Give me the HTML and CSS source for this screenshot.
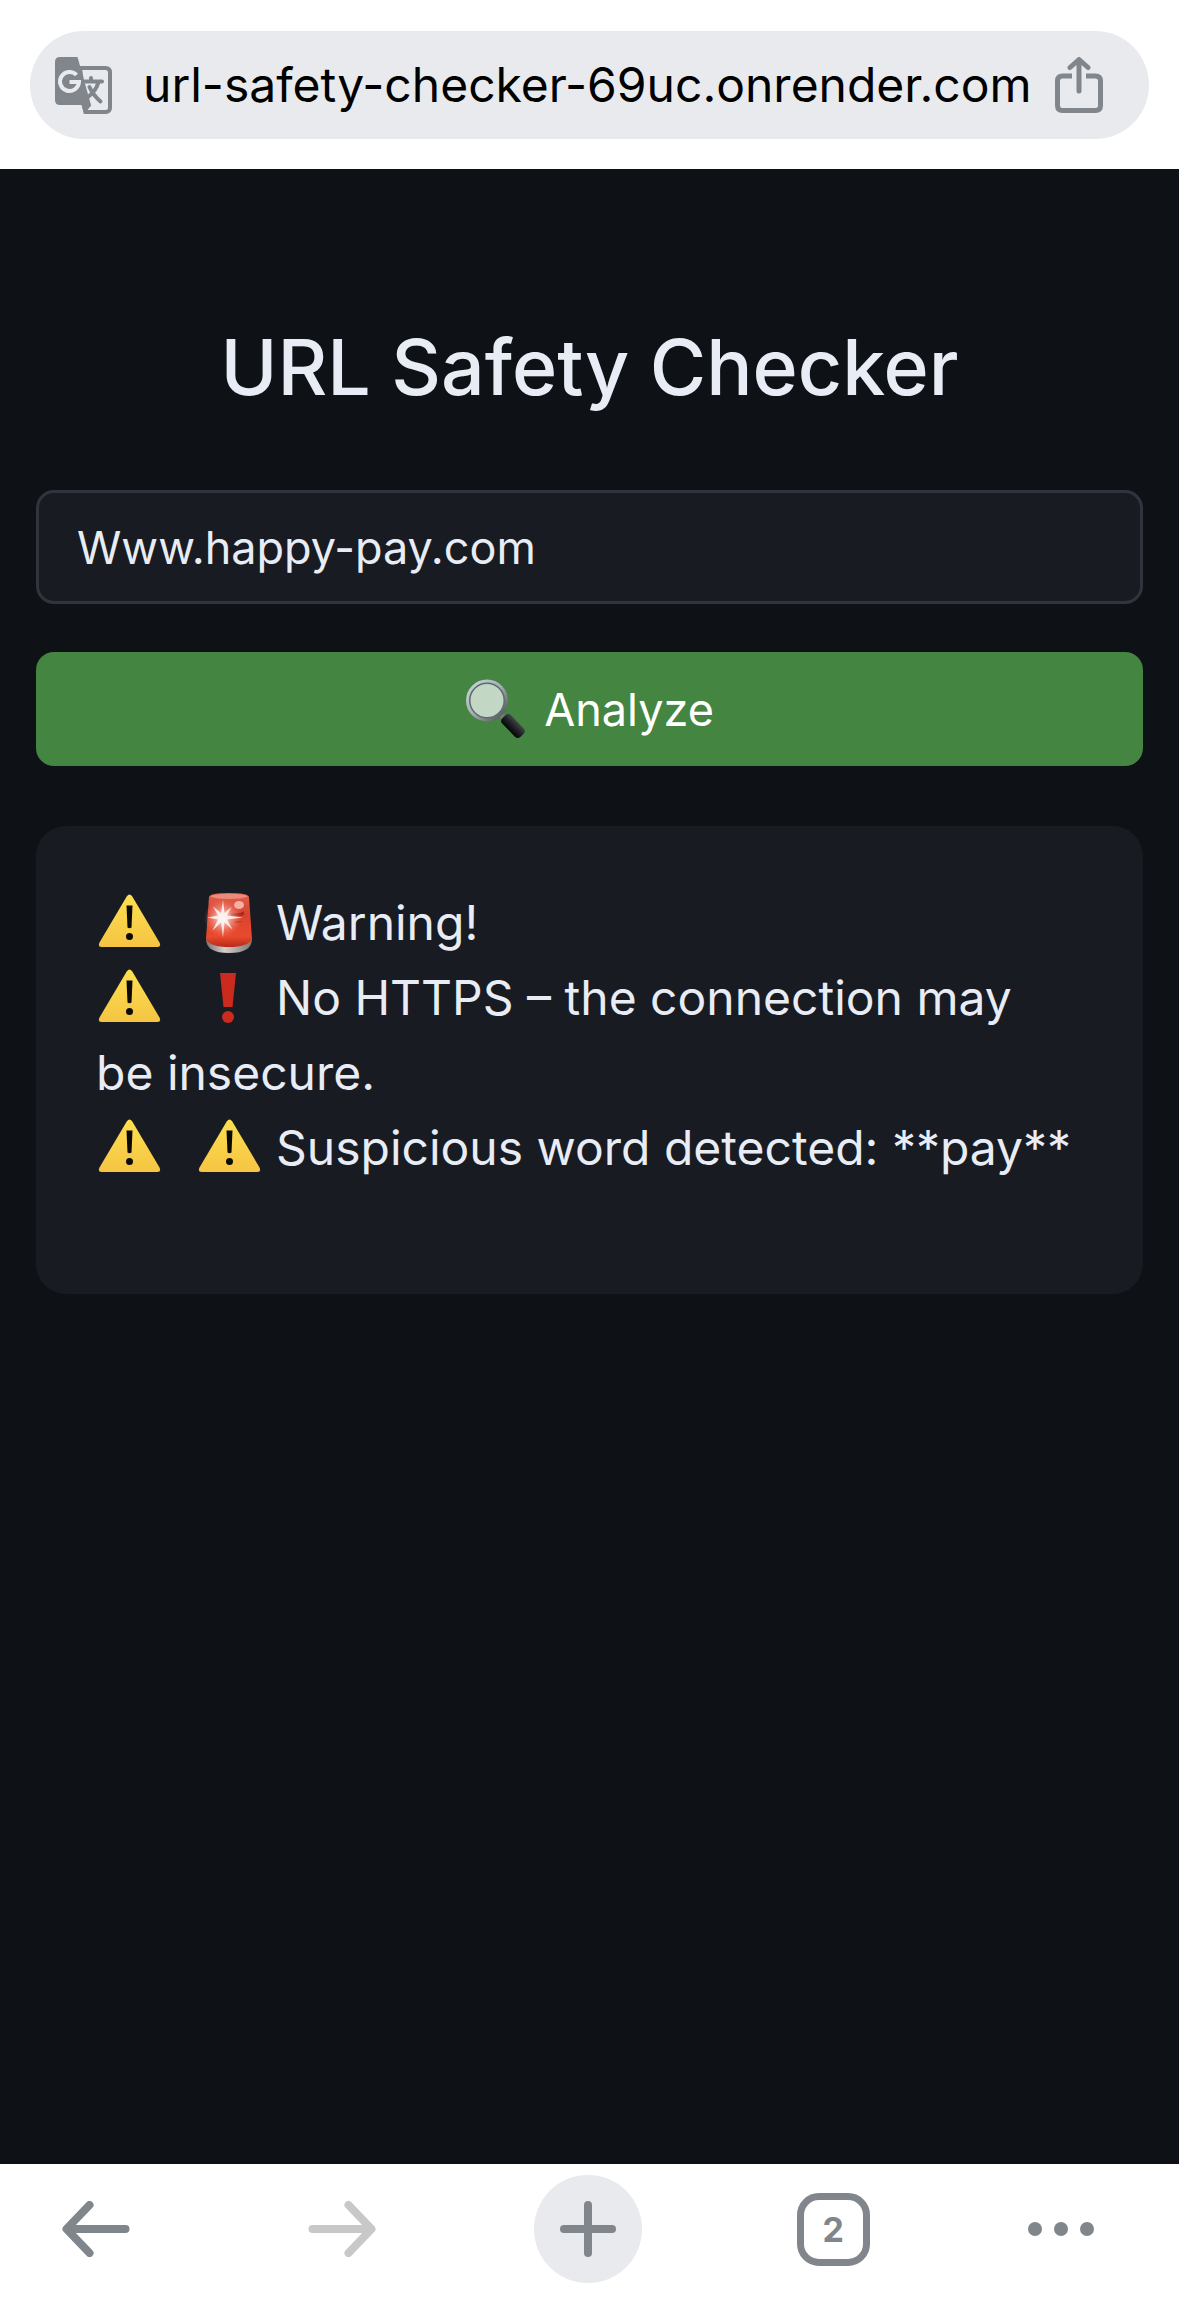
FILE: index.html
```html
<!DOCTYPE html>
<html lang="en">
<head>
<meta charset="utf-8">
<meta name="viewport" content="width=device-width, initial-scale=1">
<title>URL Safety Checker</title>
<link rel="stylesheet" href="styles.css">
</head>
<body>
<svg class="defs" aria-hidden="true">
  <defs>
    <linearGradient id="amber" x1="0" y1="0" x2="0" y2="1">
      <stop offset="0" stop-color="#fde04f"/><stop offset="1" stop-color="#f5c443"/>
    </linearGradient>
    <linearGradient id="dome" x1="0" y1="0" x2="0" y2="1">
      <stop offset="0" stop-color="#e2604d"/><stop offset=".4" stop-color="#d8432f"/><stop offset=".8" stop-color="#ea4a2e"/><stop offset="1" stop-color="#b92a19"/>
    </linearGradient>
    <linearGradient id="base" x1="0" y1="0" x2="1" y2="0">
      <stop offset="0" stop-color="#77706d"/><stop offset=".4" stop-color="#d5d0cc"/><stop offset="1" stop-color="#7d7673"/>
    </linearGradient>
    <radialGradient id="glow">
      <stop offset="0" stop-color="#fff"/><stop offset=".35" stop-color="#ffe3dc" stop-opacity=".8"/><stop offset="1" stop-color="#ff8a75" stop-opacity="0"/>
    </radialGradient>
    <linearGradient id="rim" x1="0" y1="0" x2="1" y2="1">
      <stop offset="0" stop-color="#c9dadd"/><stop offset=".5" stop-color="#a3adb0"/><stop offset="1" stop-color="#454a4c"/>
    </linearGradient>
    <linearGradient id="grip" x1="0" y1="1" x2="0" y2="0">
      <stop offset="0" stop-color="#050506"/><stop offset=".6" stop-color="#26272b"/><stop offset="1" stop-color="#44454b"/>
    </linearGradient>
    <symbol id="warning" viewBox="-1 1 66 60">
      <path d="M29.700 4.500Q32.500 .5 35.300 4.500L62.500 50.500Q64.500 55 60.500 55H4.500Q.5 55 2.500 50.500Z" fill="url(#amber)"/>
      <path d="M29.500 13.500h6l-1 22q-2 1.500-4 0Z" fill="#0c0a05"/>
      <circle cx="32.500" cy="44.500" r="3.500" fill="#0c0a05"/>
    </symbol>
    <symbol id="siren" viewBox="-1 0 66 60">
      <path d="M9 46Q9 60 32 60T55 46Z" fill="url(#base)"/>
      <path d="M12 4Q13 0 32 0T52 4L55 46Q51 54 32 54T9 46Z" fill="url(#dome)"/>
      <path d="M13 3.500Q16 .7 32 .7T51 3.500Q45 6 32 6T13 3.500Z" fill="#f0a092" opacity=".7"/>
      <path d="M34 20q10 1 13-2v4q-5 2-13 1zM36 29q6 2 9-1" fill="#7b1a12" opacity=".6"/>
      <ellipse cx="42" cy="12" rx="5" ry="4" fill="#f6b1a6"/>
      <circle cx="26" cy="25" r="19" fill="url(#glow)" opacity=".75"/>
      <path d="M26 7l1.500 13 7-6-4.500 8.500 16 2-16 2 5.500 10-8-7-1.500 15-2-15-8.500 8 5.500-11-11-2 11-2-5-9 8 6.500Z" fill="#fff" opacity=".8"/>
    </symbol>
    <symbol id="bang" viewBox="-1 0 66 60">
      <path d="M23 5h16l-3.500 34h-9Z" fill="#cb2a1f"/>
      <circle cx="31" cy="49" r="6" fill="#cb2a1f"/>
    </symbol>
  </defs>
</svg>

<header class="browser-bar">
  <div class="address">
    <button class="icon-button" type="button" aria-label="Translate">
      <svg width="57" height="57" viewBox="0 0 57 57">
        <path d="M25 11H50.500Q55 11 55 15.500V50.500Q55 55 50.500 55H31Z" fill="none" stroke="#80868b" stroke-width="4"/>
        <path d="M5 0H22.500L36 48 29 57 26.500 48H5Q0 48 0 43V5Q0 0 5 0Z" fill="#80868b"/>
        <path d="M27 48H36.500L29 57Z" fill="#80868b"/>
        <path d="M30 24.500H47M36 21V24M43.500 25Q41 34 33 40M34.500 30Q38 38 45.500 44.500" fill="none" stroke="#80868b" stroke-width="4" stroke-linecap="round"/>
        <path d="M21.500 18A9.500 9.500 0 1 0 24 25H14.500" fill="none" stroke="#e8eaed" stroke-width="4"/>
      </svg>
    </button>
    <input class="address-text" type="text" aria-label="Address" value="url-safety-checker-69uc.onrender.com">
    <button class="icon-button" type="button" aria-label="Share">
      <svg width="48" height="57" viewBox="0 0 48 57" fill="none" stroke="#80868b" stroke-width="5" stroke-linecap="round">
        <path d="M24 34V3M15 10.500L24 2.500L33 10.500" stroke-linejoin="round"/>
        <path d="M17 19H7.500Q2.500 19 2.500 24V48.500Q2.500 53.500 7.500 53.500H40.500Q45.500 53.500 45.500 48.500V24Q45.500 19 40.500 19H31" stroke-linecap="butt"/>
      </svg>
    </button>
  </div>
</header>

<main class="page">
  <h1 class="title">URL Safety Checker</h1>
  <form class="form" onsubmit="return false">
    <input class="field" type="text" aria-label="URL to check" value="Www.happy-pay.com">
    <button class="analyze" type="submit">
      <svg width="61" height="60" viewBox="0 0 61 60" aria-hidden="true">
        <path d="M35 35L41 41" stroke="#777c7e" stroke-width="5"/>
        <rect x="35" y="41" width="26" height="12" rx="4" transform="rotate(46 48 47)" fill="url(#grip)"/>
        <circle cx="22" cy="21.500" r="18.500" fill="#c3d8c4" stroke="#5d6a70" stroke-width="4"/>
        <circle cx="22" cy="21.500" r="19.500" fill="none" stroke="url(#rim)" stroke-width="3"/>
      </svg>
      <span>Analyze</span>
    </button>
  </form>
  <section class="result" aria-live="polite">
    <p class="line"><svg class="mark mark-lead" role="img" aria-label="Warning"><use href="#warning"/></svg><svg class="mark" role="img" aria-label="Siren"><use href="#siren"/></svg>Warning!</p>
    <p class="line"><svg class="mark mark-lead" role="img" aria-label="Warning"><use href="#warning"/></svg><svg class="mark" role="img" aria-label="Exclamation"><use href="#bang"/></svg>No HTTPS – the connection may be&nbsp;insecure.</p>
    <p class="line"><svg class="mark mark-lead" role="img" aria-label="Warning"><use href="#warning"/></svg><svg class="mark" role="img" aria-label="Warning"><use href="#warning"/></svg>Suspicious word detected: **pay**</p>
  </section>
</main>

<nav class="toolbar" aria-label="Browser">
  <button class="tool" type="button" aria-label="Back">
    <svg width="68" height="56" viewBox="0 0 68 56"><path d="M63.500 28H5M27.500 4L4.500 28L27.500 52"/></svg>
  </button>
  <button class="tool tool-disabled" type="button" aria-label="Forward" disabled>
    <svg width="68" height="56" viewBox="0 0 68 56"><path d="M4.500 28H63M40.500 4L63.500 28L40.500 52"/></svg>
  </button>
  <button class="tool tool-new" type="button" aria-label="New tab">
    <svg width="56" height="56" viewBox="0 0 56 56"><path d="M28 4V52M4 28H52"/></svg>
  </button>
  <button class="tool" type="button" aria-label="Open tabs"><span class="tabs">2</span></button>
  <button class="tool tool-menu" type="button" aria-label="Menu">
    <svg width="68" height="16" viewBox="0 0 68 16" class="dots"><circle cx="8" cy="8" r="7"/><circle cx="34" cy="8" r="7"/><circle cx="60" cy="8" r="7"/></svg>
  </button>
</nav>
</body>
</html>
```
FILE: styles.css
```css
*, *::before, *::after {
  box-sizing: border-box;
}

body {
  margin: 0;
  min-height: 100vh;
  display: flex;
  flex-direction: column;
  background: #0e1116;
  color: #e8ecf5;
  font-family: Inter, "Liberation Sans", sans-serif;
}

button, input {
  margin: 0;
  padding: 0;
  border: 0;
  font: inherit;
  color: inherit;
  background: none;
}

svg {
  display: block;
}

.defs {
  position: absolute;
  width: 0;
  height: 0;
}

.browser-bar {
  padding: 31px 30px 30px;
  background: #fff;
}

.address {
  display: flex;
  align-items: center;
  height: 108px;
  padding: 0 46px 0 25px;
  border-radius: 54px;
  background: #e8eaed;
}

.icon-button {
  flex: none;
}

.address-text {
  flex: 1;
  min-width: 0;
  padding: 0 0 2px 31px;
  font-size: 48px;
  color: #000;
}

.page {
  flex: 1;
  padding: 144px 36px 60px;
}

.title {
  margin: 0;
  font-size: 77px;
  font-weight: 500;
  line-height: 108px;
  text-align: center;
}

.form {
  display: flex;
  flex-direction: column;
  gap: 48px;
  margin-top: 69px;
}

.field {
  height: 114px;
  padding: 0 38px;
  border: 3px solid #31343c;
  border-radius: 18px;
  background: #181b22;
  font-size: 45px;
}

.analyze {
  display: flex;
  align-items: center;
  justify-content: center;
  gap: 18px;
  height: 114px;
  border-radius: 18px;
  background: #448541;
  color: #fff;
  font-size: 45px;
}

.result {
  margin-top: 60px;
  padding: 59px 60px 109px;
  border-radius: 30px;
  background: #181b22;
}

.line {
  margin: 0;
  font-size: 48px;
  line-height: 75px;
}

.mark {
  display: inline-block;
  width: 66px;
  height: 60px;
  margin-right: 14px;
  vertical-align: -13px;
}

.mark-lead {
  margin-right: 34px;
}

.toolbar {
  display: flex;
  align-items: center;
  justify-content: space-between;
  height: 134px;
  padding: 0 82px 4px 42px;
  background: #fff;
}

.tool {
  display: flex;
  align-items: center;
  justify-content: center;
  width: 108px;
  height: 108px;
  color: #80868b;
}

.tool svg {
  fill: none;
  stroke: currentColor;
  stroke-width: 8px;
  stroke-linecap: round;
  stroke-linejoin: round;
}

.tool .dots {
  fill: currentColor;
  stroke: none;
}

.tool-disabled {
  color: #c8c8c8;
}

.tool-new {
  border-radius: 50%;
  background: #e8eaed;
}

.tool-menu {
  width: 72px;
}

.tabs {
  display: flex;
  align-items: center;
  justify-content: center;
  width: 73px;
  height: 73px;
  border: 7px solid currentColor;
  border-radius: 22px;
  font-size: 34px;
  font-weight: 700;
}
```
